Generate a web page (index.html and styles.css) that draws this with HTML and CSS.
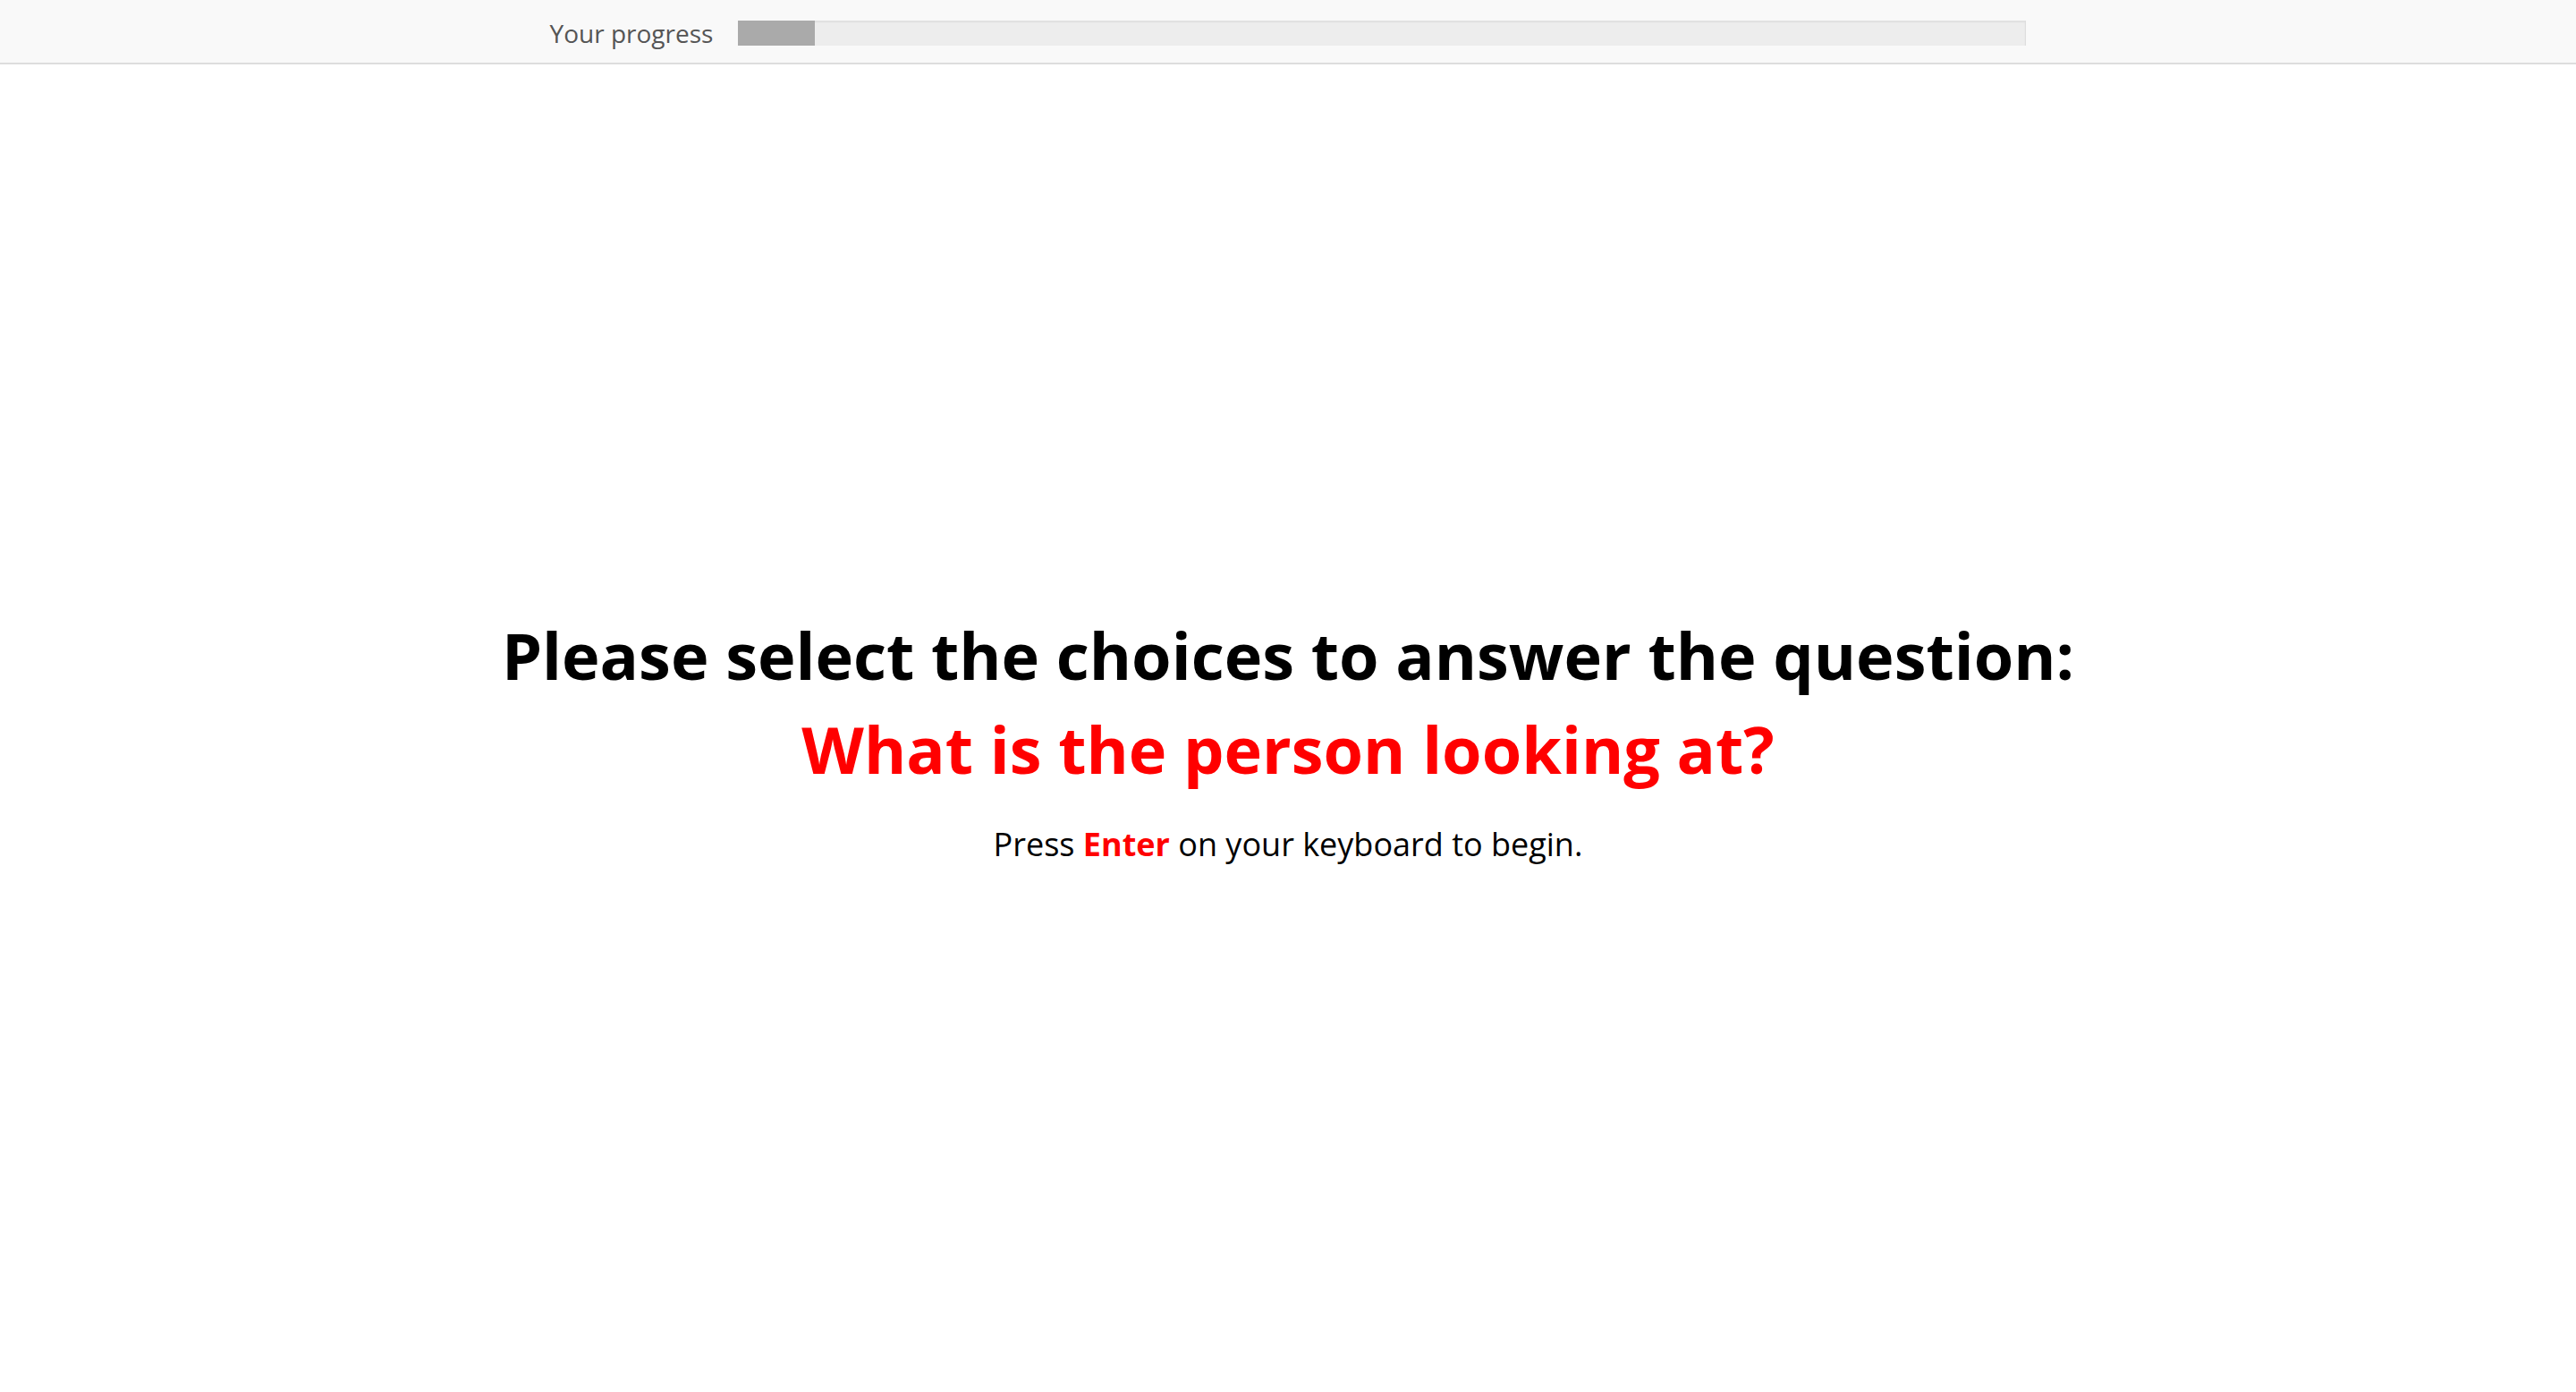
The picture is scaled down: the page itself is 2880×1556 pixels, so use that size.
FILE: index.html
```html
<!DOCTYPE html>
<html lang="en">
<head>
<meta charset="utf-8">
<title>Survey</title>
<link rel="stylesheet" href="styles.css">
</head>
<body>
<header class="topbar">
  <span class="progress-label">Your progress</span>
  <div class="progress-track"><div class="progress-fill" style="width: 86px"></div></div>
</header>
<main class="intro">
  <h1 class="intro-title">Please select the choices to answer the question:</h1>
  <h2 class="intro-question">What is the person looking at?</h2>
  <p class="intro-hint">Press <strong class="key">Enter</strong> on your keyboard to begin.</p>
</main>
</body>
</html>
```

FILE: styles.css
```css
html, body {
  margin: 0;
  padding: 0;
  background: #ffffff;
  font-family: "Open Sans", "Noto Sans", sans-serif;
  color: #000;
}

.topbar {
  height: 66px;
  padding-top: 4px;
  background: #f9f9f9;
  border-bottom: 2px solid #dddddd;
  display: flex;
  justify-content: center;
  align-items: center;
  gap: 28px;
}

.progress-label {
  font-size: 28px;
  color: #555555;
  line-height: 1;
}

.progress-track {
  width: 1440px;
  height: 28px;
  box-sizing: border-box;
  background: #ededed;
  border-right: 1px solid #dedede;
  box-shadow: inset 0 2px 2px rgba(0, 0, 0, 0.06);
  display: flex;
}

.progress-fill {
  height: 100%;
  background: #aaaaaa;
}

.intro {
  padding-top: 611px;
  text-align: center;
  display: flex;
  flex-direction: column;
  align-items: center;
}

.intro-title {
  margin: 0;
  font-size: 72px;
  font-weight: 700;
  line-height: 98px;
  color: #000;
}

.intro-question {
  margin: 7px 0 0;
  font-size: 72px;
  font-weight: 700;
  line-height: 98px;
  color: #ff0000;
}

.intro-hint {
  margin: 33px 0 0;
  font-size: 36px;
  line-height: 49px;
  color: #000;
}

.key {
  color: #ff0000;
  font-weight: 700;
}
```
